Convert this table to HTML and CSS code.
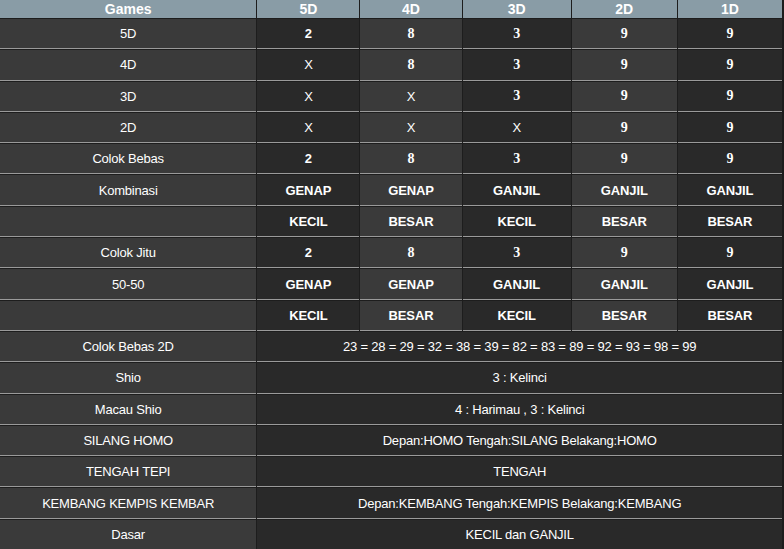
FILE: index.html
```html
<!DOCTYPE html>
<html>
<head>
<meta charset="utf-8">
<link rel="stylesheet" href="styles.css">
</head>
<body>
<table class="result">
<colgroup>
<col class="c-games"><col class="c-5d"><col class="c-4d"><col class="c-3d"><col class="c-2d"><col class="c-1d">
</colgroup>
<thead>
<tr><th>Games</th><th>5D</th><th>4D</th><th>3D</th><th>2D</th><th>1D</th></tr>
</thead>
<tbody>
<tr><td class="lbl">5D</td><td class="dk b">2</td><td class="lt b sf">8</td><td class="dk b sf">3</td><td class="lt b sf">9</td><td class="dk b sf">9</td></tr>
<tr><td class="lbl">4D</td><td class="dk">X</td><td class="lt b sf">8</td><td class="dk b sf">3</td><td class="lt b sf">9</td><td class="dk b sf">9</td></tr>
<tr><td class="lbl">3D</td><td class="dk">X</td><td class="lt">X</td><td class="dk b sf">3</td><td class="lt b sf">9</td><td class="dk b sf">9</td></tr>
<tr><td class="lbl">2D</td><td class="dk">X</td><td class="lt">X</td><td class="dk">X</td><td class="lt b sf">9</td><td class="dk b sf">9</td></tr>
<tr><td class="lbl">Colok Bebas</td><td class="dk b">2</td><td class="lt b sf">8</td><td class="dk b sf">3</td><td class="lt b sf">9</td><td class="dk b sf">9</td></tr>
<tr><td class="lbl">Kombinasi</td><td class="dk b">GENAP</td><td class="lt b">GENAP</td><td class="dk b">GANJIL</td><td class="lt b">GANJIL</td><td class="dk b">GANJIL</td></tr>
<tr><td class="lbl"></td><td class="dk b">KECIL</td><td class="lt b">BESAR</td><td class="dk b">KECIL</td><td class="lt b">BESAR</td><td class="dk b">BESAR</td></tr>
<tr><td class="lbl">Colok Jitu</td><td class="dk b">2</td><td class="lt b sf">8</td><td class="dk b sf">3</td><td class="lt b sf">9</td><td class="dk b sf">9</td></tr>
<tr><td class="lbl">50-50</td><td class="dk b">GENAP</td><td class="lt b">GENAP</td><td class="dk b">GANJIL</td><td class="lt b">GANJIL</td><td class="dk b">GANJIL</td></tr>
<tr><td class="lbl"></td><td class="dk b">KECIL</td><td class="lt b">BESAR</td><td class="dk b">KECIL</td><td class="lt b">BESAR</td><td class="dk b">BESAR</td></tr>
<tr><td class="lbl">Colok Bebas 2D</td><td class="dk" colspan="5">23 = 28 = 29 = 32 = 38 = 39 = 82 = 83 = 89 = 92 = 93 = 98 = 99</td></tr>
<tr><td class="lbl">Shio</td><td class="dk" colspan="5">3 : Kelinci</td></tr>
<tr><td class="lbl">Macau Shio</td><td class="dk" colspan="5">4 : Harimau , 3 : Kelinci</td></tr>
<tr><td class="lbl">SILANG HOMO</td><td class="dk" colspan="5">Depan:HOMO Tengah:SILANG Belakang:HOMO</td></tr>
<tr><td class="lbl">TENGAH TEPI</td><td class="dk" colspan="5">TENGAH</td></tr>
<tr><td class="lbl">KEMBANG KEMPIS KEMBAR</td><td class="dk" colspan="5">Depan:KEMBANG Tengah:KEMPIS Belakang:KEMBANG</td></tr>
<tr><td class="lbl">Dasar</td><td class="dk" colspan="5">KECIL dan GANJIL</td></tr>
</tbody>
</table>
</body>
</html>
```

FILE: styles.css
```css
html, body {
  margin: 0;
  padding: 0;
  background: #1d1d1d;
}
.result {
  width: 784px;
  table-layout: fixed;
  border-collapse: separate;
  border-spacing: 1px 0;
  margin-left: -1px;
  background: #1d1d1d;
  font-family: "Liberation Sans", Arial, sans-serif;
  font-size: 13px;
  letter-spacing: -0.2px;
  color: #ffffff;
}
.c-games { width: 256px; }
.c-5d { width: 102px; }
.c-4d { width: 101px; }
.c-3d { width: 108px; }
.c-2d { width: 105px; }
.c-1d { width: 104px; }
.result th {
  background: #899ca6;
  font-size: 14px;
  font-weight: bold;
  letter-spacing: 0;
  height: 18px;
  padding: 0;
  line-height: 18px;
  text-align: center;
}
.result td {
  height: 29.3px;
  padding: 0;
  text-align: center;
  border-bottom: 1px solid #9a9a9a;
  border-top: 1px solid #1d1d1d;
  box-sizing: content-box;
}
.lbl { background: #3a3a3a; }
.lt { background: #3a3a3a; }
.dk { background: #292929; }
.b { font-weight: bold; letter-spacing: -0.1px; }
.sf { font-family: "Liberation Serif", "Times New Roman", serif; font-size: 14px; letter-spacing: 0; }
```
